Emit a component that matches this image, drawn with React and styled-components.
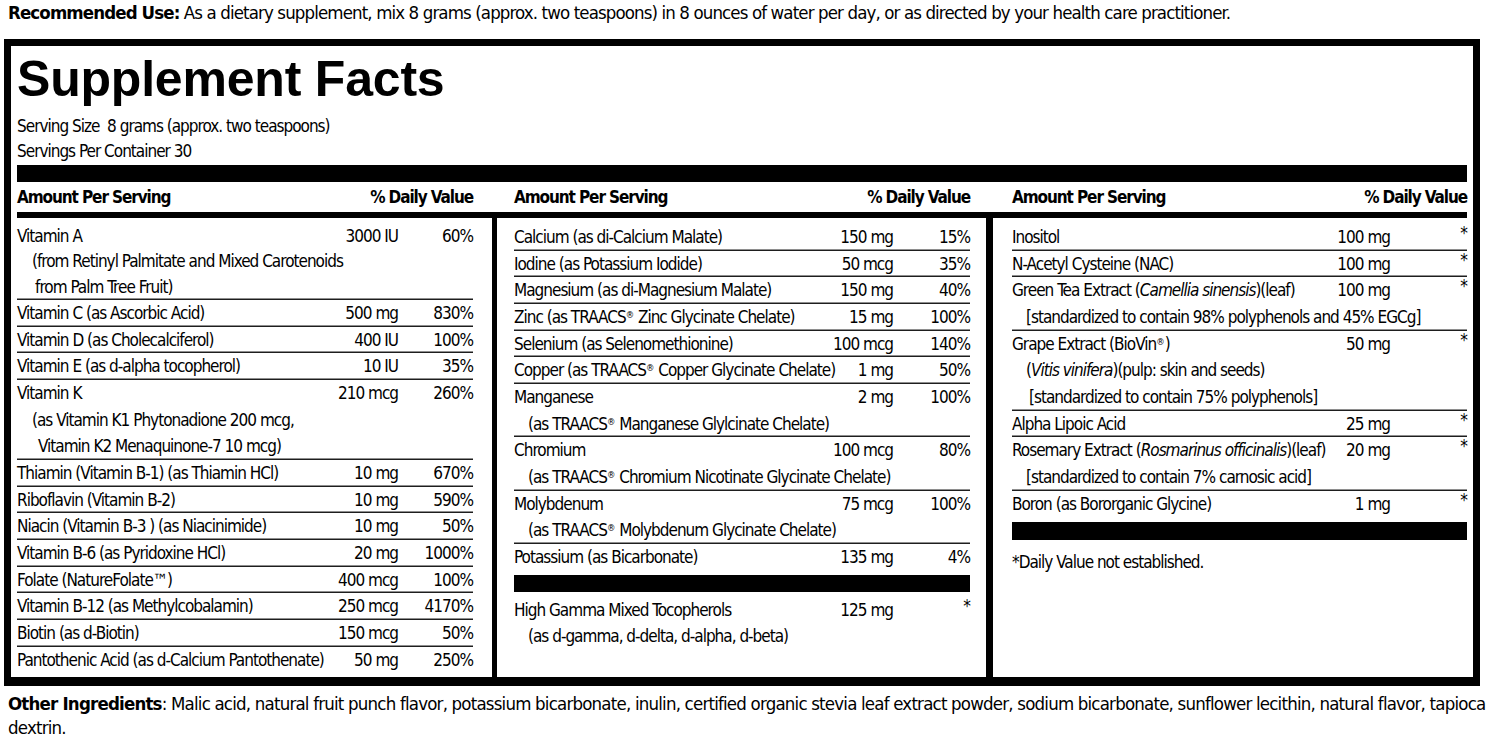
import React from "react";
import styled, { createGlobalStyle } from "styled-components";

const GlobalStyle = createGlobalStyle`
  html, body { margin:0; padding:0; background:#fff; }
  body {
    font-family: "Liberation Sans Narrow", "DejaVu Sans Condensed", "Liberation Sans", sans-serif;
    color:#000;
  }
`;

const Page = styled.div`
  width:1492px;
  height:740px;
  overflow:hidden;
`;

const Note = styled.p`
  margin:0 0 13px;
  padding-left:8px;
  font-size:18.5px;
  letter-spacing:-0.88px;
  line-height:26px;
  white-space:nowrap;
  b { font-weight:700; }
`;

const Label = styled.div`
  width:1462px;
  margin-left:4px;
  border:7px solid #000;
  border-bottom-width:9px;
`;

const Top = styled.div`
  padding:0 6px;
`;

const Title = styled.h1`
  margin:0;
  padding-top:7.5px;
  font-family:"Liberation Sans", Arial, sans-serif;
  font-weight:700;
  font-size:50px;
  line-height:50px;
  letter-spacing:-0.2px;
`;

const Serving = styled.div`
  margin-top:10px;
  font-size:17px;
  letter-spacing:-1px;
  line-height:25px;
`;

const Bar = styled.div`
  height:${p => p.$h}px;
  margin-top:${p => p.$mt || 0}px;
  margin-bottom:${p => p.$mb || 0}px;
  background:#000;
`;

const Columns = styled.div`
  display:grid;
  grid-template-columns:481px 494px 487px;
`;

const Panel = styled.div`
  --dv:${p => p.$dv}px;
  border-left:${p => p.$sep || 0}px solid ${p => (p.$head ? "transparent" : "#000")};
  padding:${p => (p.$head ? "2px" : "6px")} ${p => p.$pr}px ${p => (p.$head ? "2px" : "4px")} ${p => p.$pl}px;
  font-size:17px;
  letter-spacing:-1px;
`;

const HeadRow = styled.div`
  display:flex;
  justify-content:space-between;
  font-weight:700;
  font-size:17px;
  letter-spacing:-1.1px;
  line-height:26px;
`;

const Row = styled.div`
  line-height:${p => p.$lh || 26.67}px;
  box-shadow:${p => (p.$noline ? "none" : "inset 0 -1.5px 0 #1e1e1e")};
`;

const Main = styled.div`
  display:grid;
  grid-template-columns:1fr auto var(--dv);
  white-space:nowrap;
`;

const Amount = styled.span`
  text-align:right;
`;

const Dv = styled.span`
  text-align:right;
  ${p => p.$star && "align-self:start; line-height:18px; font-size:17px;"}
`;

const Sub = styled.div`
  padding-left:${p => p.$indent}px;
  white-space:nowrap;
`;

const Reg = styled.span`
  font-size:0.55em;
  vertical-align:0.55em;
  line-height:0;
  letter-spacing:0;
`;

const Footnote = styled.div`
  line-height:26.67px;
`;

const Other = styled.p`
  margin:6px 0 0;
  padding-left:8px;
  font-size:18.5px;
  letter-spacing:-0.8px;
  line-height:24px;
  white-space:nowrap;
  b { font-weight:700; }
`;

const col1 = [
  { name: "Vitamin A", amt: "3000 IU", dv: "60%", lh: 25.33, subs: [["(from Retinyl Palmitate and Mixed Carotenoids", 15], ["from Palm Tree Fruit)", 18]] },
  { name: "Vitamin C (as Ascorbic Acid)", amt: "500 mg", dv: "830%" },
  { name: "Vitamin D (as Cholecalciferol)", amt: "400 IU", dv: "100%" },
  { name: "Vitamin E (as d-alpha tocopherol)", amt: "10 IU", dv: "35%" },
  { name: "Vitamin K", amt: "210 mcg", dv: "260%", subs: [["(as Vitamin K1 Phytonadione 200 mcg,", 15], ["Vitamin K2 Menaquinone-7 10 mcg)", 21]] },
  { name: "Thiamin (Vitamin B-1) (as Thiamin HCl)", amt: "10 mg", dv: "670%" },
  { name: "Riboflavin (Vitamin B-2)", amt: "10 mg", dv: "590%" },
  { name: "Niacin (Vitamin B-3 ) (as Niacinimide)", amt: "10 mg", dv: "50%" },
  { name: "Vitamin B-6 (as Pyridoxine HCl)", amt: "20 mg", dv: "1000%" },
  { name: "Folate (NatureFolate™)", amt: "400 mcg", dv: "100%" },
  { name: "Vitamin B-12 (as Methylcobalamin)", amt: "250 mcg", dv: "4170%" },
  { name: "Biotin (as d-Biotin)", amt: "150 mcg", dv: "50%" },
  { name: "Pantothenic Acid (as d-Calcium Pantothenate)", amt: "50 mg", dv: "250%", noline: true },
];

const traacs = <>as TRAACS<Reg>®</Reg></>;

const col2 = [
  { name: "Calcium (as di-Calcium Malate)", amt: "150 mg", dv: "15%" },
  { name: "Iodine (as Potassium Iodide)", amt: "50 mcg", dv: "35%" },
  { name: "Magnesium (as di-Magnesium Malate)", amt: "150 mg", dv: "40%" },
  { name: <>Zinc ({traacs} Zinc Glycinate Chelate)</>, amt: "15 mg", dv: "100%" },
  { name: "Selenium (as Selenomethionine)", amt: "100 mcg", dv: "140%" },
  { name: <>Copper ({traacs} Copper Glycinate Chelate)</>, amt: "1 mg", dv: "50%" },
  { name: "Manganese", amt: "2 mg", dv: "100%", subs: [[<>({traacs} Manganese Glylcinate Chelate)</>, 14]] },
  { name: "Chromium", amt: "100 mcg", dv: "80%", subs: [[<>({traacs} Chromium Nicotinate Glycinate Chelate)</>, 14]] },
  { name: "Molybdenum", amt: "75 mcg", dv: "100%", subs: [[<>({traacs} Molybdenum Glycinate Chelate)</>, 14]] },
  { name: "Potassium (as Bicarbonate)", amt: "135 mg", dv: "4%", noline: true },
];

const col2b = [
  { name: "High Gamma Mixed Tocopherols", amt: "125 mg", dv: "*", noline: true, subs: [["(as d-gamma, d-delta, d-alpha, d-beta)", 14]] },
];

const col3 = [
  { name: "Inositol", amt: "100 mg", dv: "*" },
  { name: "N-Acetyl Cysteine (NAC)", amt: "100 mg", dv: "*" },
  { name: <>Green Tea Extract (<i>Camellia sinensis</i>)(leaf)</>, amt: "100 mg", dv: "*", subs: [["[standardized to contain 98% polyphenols and 45% EGCg]", 14]] },
  { name: <>Grape Extract (BioVin<Reg>®</Reg>)</>, amt: "50 mg", dv: "*", subs: [[<>(<i>Vitis vinifera</i>)(pulp: skin and seeds)</>, 14], ["[standardized to contain 75% polyphenols]", 17]] },
  { name: "Alpha Lipoic Acid", amt: "25 mg", dv: "*" },
  { name: <>Rosemary Extract (<i>Rosmarinus officinalis</i>)(leaf)</>, amt: "20 mg", dv: "*", subs: [["[standardized to contain 7% carnosic acid]", 14]] },
  { name: "Boron (as Bororganic Glycine)", amt: "1 mg", dv: "*", noline: true },
];

function Rows({ items }) {
  return items.map((it, i) => (
    <Row key={i} $noline={it.noline} $lh={it.lh}>
      <Main>
        <span>{it.name}</span>
        <Amount>{it.amt}</Amount>
        <Dv $star={it.dv === "*"}>{it.dv}</Dv>
      </Main>
      {(it.subs || []).map(([t, ind], j) => (
        <Sub key={j} $indent={ind}>{t}</Sub>
      ))}
    </Row>
  ));
}

const layout = [
  { sep: 0, pl: 6, pr: 19, dv: 75 },
  { sep: 5, pl: 17, pr: 16, dv: 77 },
  { sep: 7, pl: 19, pr: 6, dv: 77 },
];

function BodyPanel({ i, children }) {
  const l = layout[i];
  return (
    <Panel $sep={l.sep} $pl={l.pl} $pr={l.pr} $dv={l.dv}>
      {children}
    </Panel>
  );
}

export default function App() {
  return (
    <Page>
      <GlobalStyle />
      <Note>
        <b>Recommended Use:</b> As a dietary supplement, mix 8 grams (approx. two teaspoons) in 8 ounces of water per day, or as directed by your health care practitioner.
      </Note>
      <Label>
        <Top>
          <Title>Supplement Facts</Title>
          <Serving>
            <div>Serving Size&nbsp; 8 grams (approx. two teaspoons)</div>
            <div>Servings Per Container 30</div>
          </Serving>
          <Bar $h={17} $mt={1.5} />
        </Top>
        <Columns>
          {layout.map((l, i) => (
            <Panel key={i} $head $sep={l.sep} $pl={l.pl} $pr={l.pr} $dv={l.dv}>
              <HeadRow>
                <span>Amount Per Serving</span>
                <span>% Daily Value</span>
              </HeadRow>
            </Panel>
          ))}
        </Columns>
        <Top>
          <Bar $h={6} />
        </Top>
        <Columns>
          <BodyPanel i={0}>
            <Rows items={col1} />
          </BodyPanel>
          <BodyPanel i={1}>
            <Rows items={col2} />
            <Bar $h={17} $mt={4.3} $mb={4.7} />
            <Rows items={col2b} />
          </BodyPanel>
          <BodyPanel i={2}>
            <Rows items={col3} />
            <Bar $h={18} $mt={4.7} $mb={8.7} />
            <Footnote>*Daily Value not established.</Footnote>
          </BodyPanel>
        </Columns>
      </Label>
      <Other>
        <b>Other Ingredients</b>: Malic acid, natural fruit punch flavor, potassium bicarbonate, inulin, certified organic stevia leaf extract powder, sodium bicarbonate, sunflower lecithin, natural flavor, tapioca
        <br />
        dextrin.
      </Other>
    </Page>
  );
}
